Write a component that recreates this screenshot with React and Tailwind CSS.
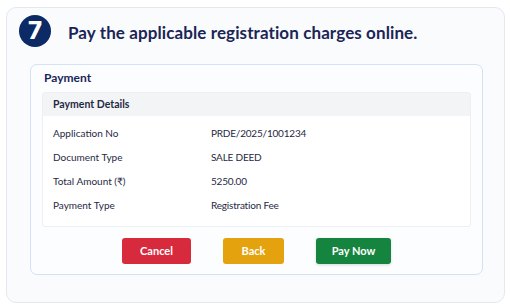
const rows = [
  ["Application No", "PRDE/2025/1001234"],
  ["Document Type", "SALE DEED"],
  ["Total Amount (₹)", "5250.00"],
  ["Payment Type", "Registration Fee"],
];

export default function App() {
  return (
    <div
      className="w-[510px] h-[304px] bg-white pl-[6px] pt-[7px] pr-[5px] pb-[1px]"
      style={{ fontFamily: "Lato, 'Noto Sans', sans-serif" }}
    >
      <div className="h-full rounded-[10px] border border-[#e4e9f1] bg-[#fafbfc] pl-[12px] pr-[21px] pt-[7px]">
        <div className="flex items-center gap-[17px]">
          <div
            className="w-[32px] h-[32px] rounded-full bg-[#0c2a66] flex items-center justify-center text-white text-[24px] font-extrabold leading-none"
            style={{ fontFamily: "Inter, sans-serif" }}
          >
            7
          </div>
          <h1 className="mt-[3px] text-[17px] font-bold text-[#1a2558] tracking-[0.1px]">
            Pay the applicable registration charges online.
          </h1>
        </div>

        <div className="mt-[17px] ml-[11px] rounded-[7px] border border-[#d3e2f4] bg-[#fcfdfe] px-[11px] pt-[4px] pb-[10px]">
          <div className="text-[12px] font-bold text-[#1a2558] leading-[18px] pl-[2px]">
            Payment
          </div>
          <div className="mt-[5px] border border-[#eceff3] rounded-[3px] bg-white">
            <div className="h-[23px] bg-[#f3f4f6] flex items-center pl-[10px] text-[10.5px] font-bold text-[#1f2a44]">
              Payment Details
            </div>
            <div className="pt-[5px] pb-[9px]">
              {rows.map(([label, value]) => (
                <div
                  key={label}
                  className="h-[24px] flex items-center text-[10px] text-[#1f2a44]"
                >
                  <div className="w-[168px] pl-[10px]">{label}</div>
                  <div className="tracking-[-0.2px]">{value}</div>
                </div>
              ))}
            </div>
          </div>
          <div className="mt-[11px] flex justify-center gap-[32px] text-[11px] font-bold text-white">
            <button className="w-[69px] h-[26px] rounded-[3px] bg-[#d72a3d]">Cancel</button>
            <button className="w-[61px] h-[26px] rounded-[3px] bg-[#e4a20e]">Back</button>
            <button className="w-[75px] h-[26px] rounded-[3px] bg-[#14843e] shadow-[0_1px_3px_rgba(0,0,0,0.15)]">
              Pay Now
            </button>
          </div>
        </div>
      </div>
    </div>
  );
}
